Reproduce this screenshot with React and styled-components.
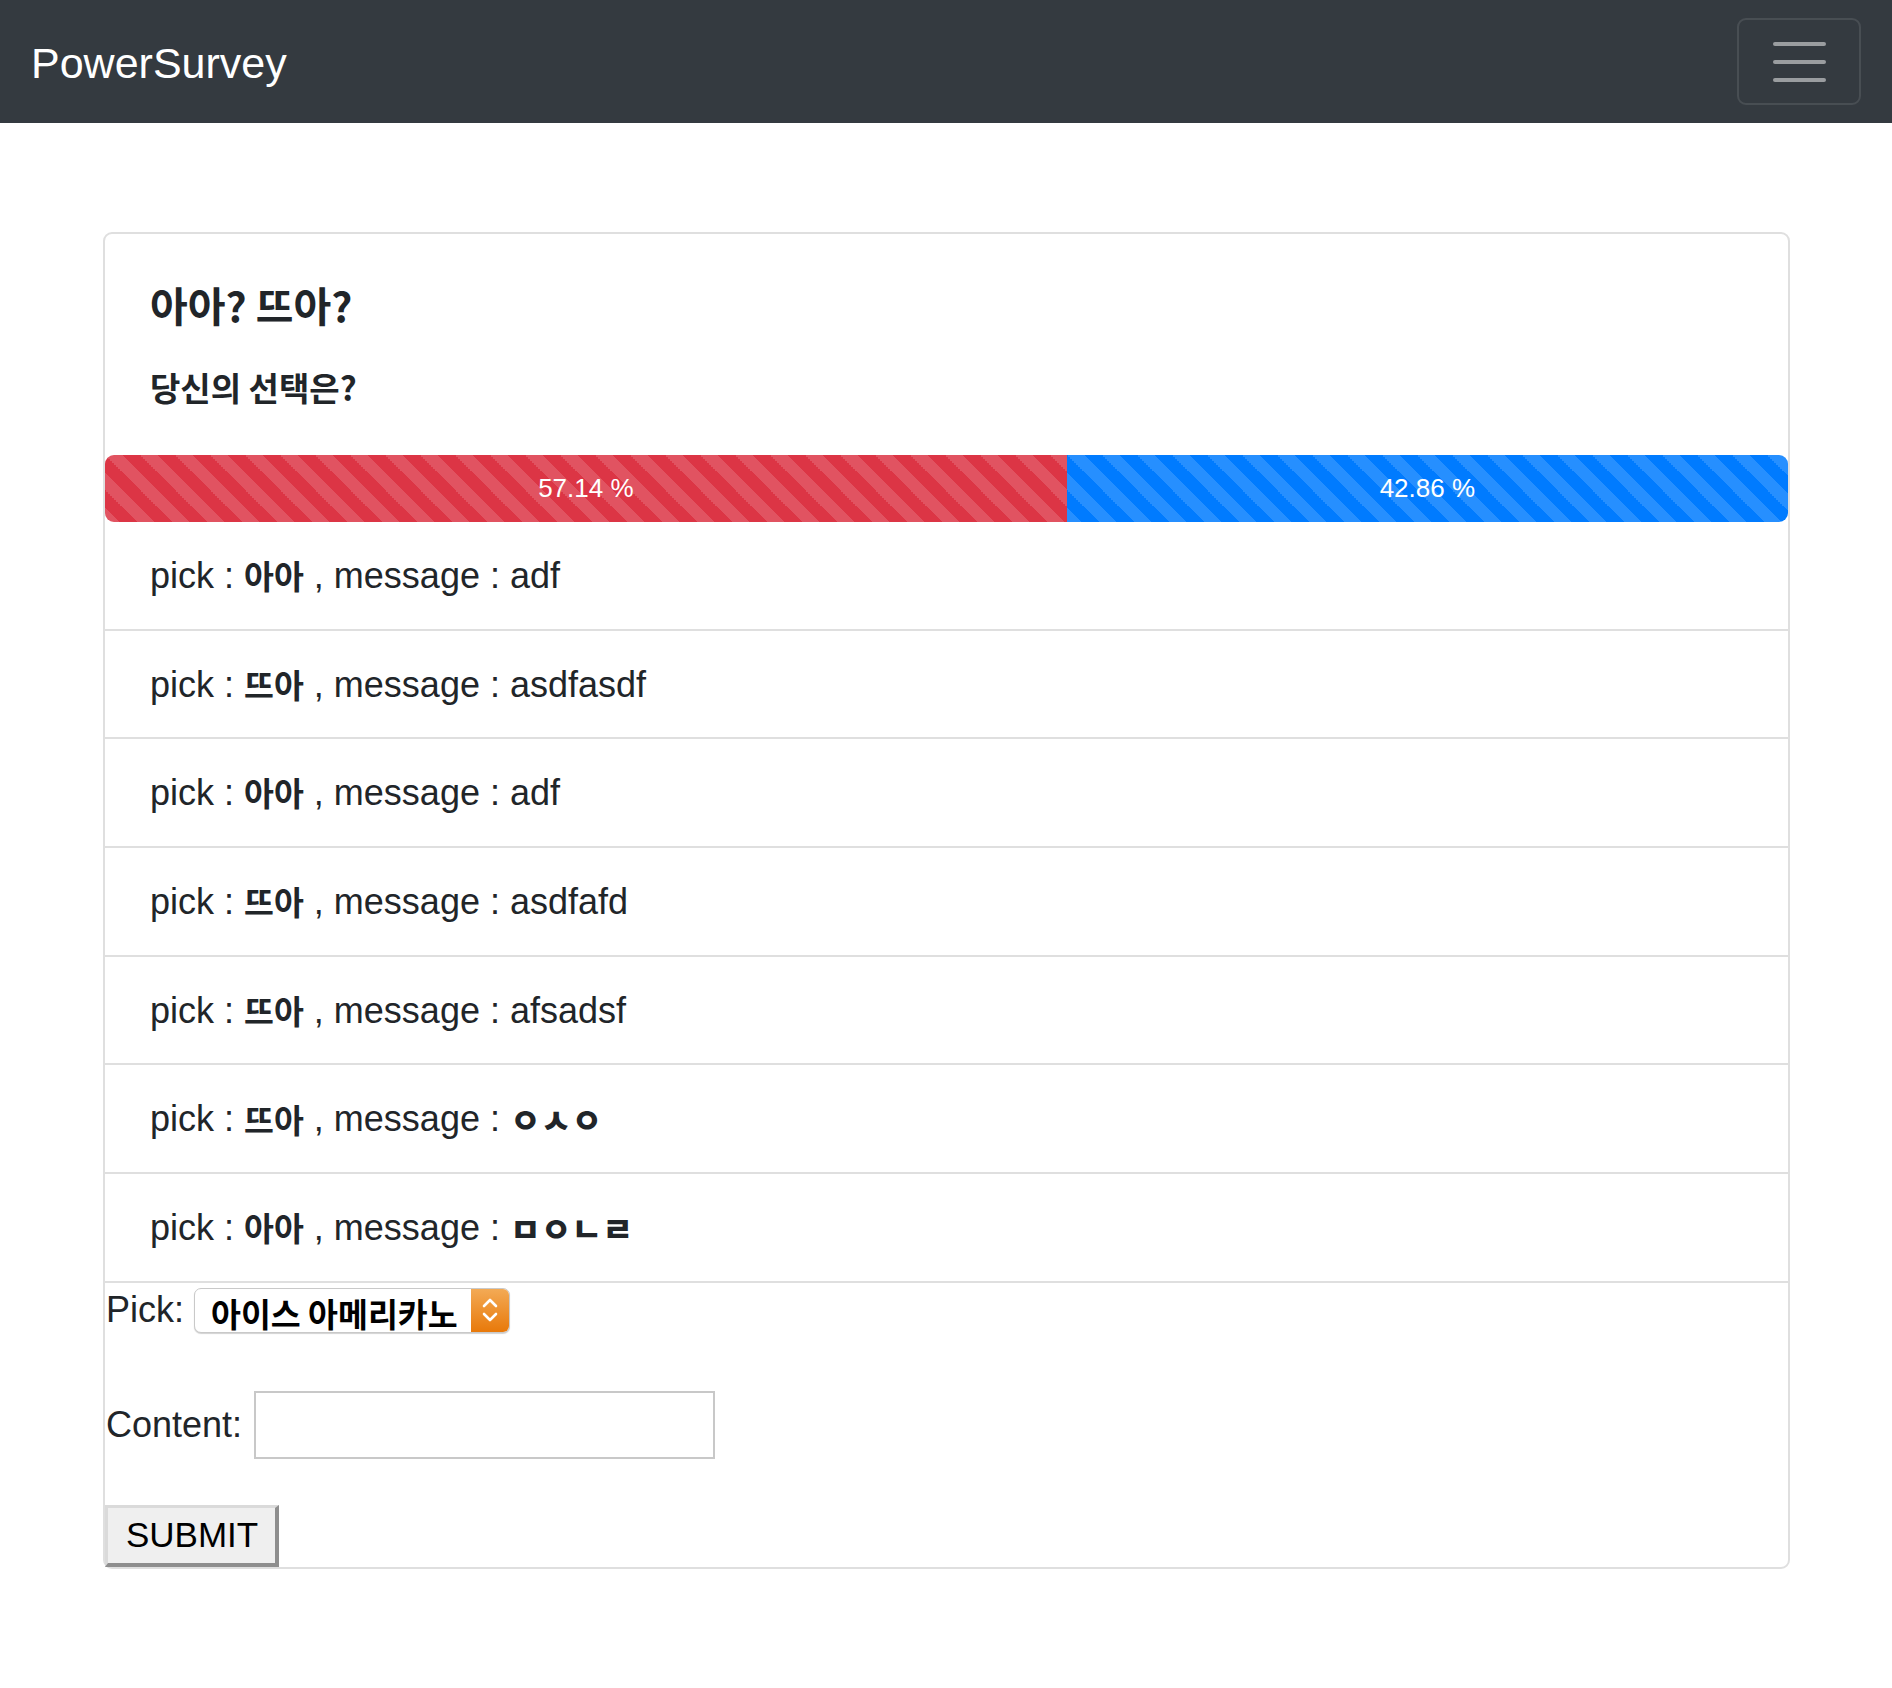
import React from "react";
import styled, { createGlobalStyle } from "styled-components";

const GlobalStyle = createGlobalStyle`
  html, body { margin: 0; padding: 0; background: #fff; }
  body {
    font-family: "Liberation Sans", Arial, "Noto Sans CJK KR", sans-serif;
    color: #212529;
  }
  * { box-sizing: border-box; }
`;

const Navbar = styled.nav`
  height: 123px;
  background: #343a40;
  display: flex;
  align-items: center;
  justify-content: space-between;
  padding: 0 31px;
`;

const Brand = styled.a`
  color: #fff;
  font-size: 43px;
  line-height: 1;
  text-decoration: none;
  padding-top: 3px;
`;

const Toggler = styled.button`
  width: 124px;
  height: 87px;
  border: 2px solid rgba(255, 255, 255, 0.1);
  border-radius: 9px;
  background: transparent;
  display: flex;
  flex-direction: column;
  align-items: center;
  justify-content: center;
  gap: 14px;
  padding: 0;
`;

const TogglerBar = styled.span`
  display: block;
  width: 53px;
  height: 4px;
  border-radius: 2px;
  background: rgba(255, 255, 255, 0.5);
`;

const Main = styled.main`
  padding: 109px 102px 120px 103px;
`;

const Card = styled.section`
  border: 2px solid #dfdfdf;
  border-radius: 9px;
  display: flex;
  flex-direction: column;
`;

const CardBody = styled.div`
  padding: 44px 44px 48px 45px;
`;

const Title = styled.h5`
  margin: 0 0 37px;
  font-family: "Noto Sans CJK KR", "Liberation Sans", sans-serif;
  font-weight: 700;
  font-size: 41px;
  line-height: 52px;
  color: #212529;
`;

const Subtitle = styled.h6`
  margin: 0;
  font-family: "Noto Sans CJK KR", "Liberation Sans", sans-serif;
  font-weight: 700;
  font-size: 33px;
  line-height: 40px;
  color: #212529;
`;

const Progress = styled.div`
  display: flex;
  height: 67px;
  border-radius: 9px;
  overflow: hidden;
`;

const Bar = styled.div`
  display: flex;
  align-items: center;
  justify-content: center;
  color: #fff;
  font-size: 26px;
  background-color: ${(p) => p.$color};
  background-image: linear-gradient(
    45deg,
    rgba(255, 255, 255, 0.15) 25%,
    transparent 25%,
    transparent 50%,
    rgba(255, 255, 255, 0.15) 50%,
    rgba(255, 255, 255, 0.15) 75%,
    transparent 75%,
    transparent
  );
  background-size: 35px 35px;
`;

const List = styled.ul`
  margin: 0;
  padding: 0;
  list-style: none;
`;

const ListItem = styled.li`
  display: flex;
  align-items: center;
  height: 108.7px;
  padding: 0 44px 0 45px;
  font-size: 36px;
  line-height: 53px;
  border-bottom: 2px solid #dfdfdf;
  white-space: pre;
`;

const PickName = styled.b`
  font-family: "Noto Sans CJK KR", sans-serif;
  font-weight: 700;
  font-size: 32.5px;
  line-height: 1;
`;

const Jamo = styled.span`
  font-family: "Noto Sans CJK KR", sans-serif;
  font-weight: 800;
  font-size: 33.5px;
  line-height: 1;
`;

const Form = styled.form`
  display: flex;
  flex-direction: column;
  align-items: flex-start;
`;

const Field = styled.div`
  display: flex;
  align-items: center;
  gap: ${(p) => p.$gap || 12}px;
  min-height: 55px;
  font-size: 36px;
  padding-left: 1px;
  margin-bottom: ${(p) => p.$mb || 0}px;
`;

const Label = styled.label`
  color: #212529;
`;

const SelectBox = styled.div`
  display: flex;
  width: 316px;
  height: 45px;
  border: 1px solid #c9c9c9;
  border-radius: 7px;
  overflow: hidden;
  background: #fff;
  box-shadow: 0 1px 1px rgba(0, 0, 0, 0.18);
`;

const NativeSelect = styled.select`
  appearance: none;
  -webkit-appearance: none;
  flex: 1;
  min-width: 0;
  height: 100%;
  border: 0;
  outline: 0;
  background: transparent;
  padding: 0 0 0 16px;
  font-family: "Noto Sans CJK KR", sans-serif;
  font-weight: 700;
  font-size: 32.5px;
  color: #000;
`;

const Stepper = styled.span`
  width: 38px;
  display: flex;
  align-items: center;
  justify-content: center;
  background: linear-gradient(#f3aa55, #e8790a);
`;

const TextInput = styled.input`
  width: 461px;
  height: 68px;
  border: 2px solid #c8c8c8;
  font-size: 30px;
  padding: 0 8px;
`;

const SubmitButton = styled.button`
  height: 62px;
  padding: 0 17px 0 18px;
  font-family: "Liberation Sans", Arial, sans-serif;
  font-size: 35px;
  color: #000;
  background: #efefef;
  border-style: solid;
  border-width: 3px 4px 4px 3px;
  border-color: #dadada #8e8e8e #8e8e8e #dadada;
`;

const votes = [
  { pick: "아아", message: "adf" },
  { pick: "뜨아", message: "asdfasdf" },
  { pick: "아아", message: "adf" },
  { pick: "뜨아", message: "asdfafd" },
  { pick: "뜨아", message: "afsadsf" },
  { pick: "뜨아", message: "ㅇㅅㅇ" },
  { pick: "아아", message: "ㅁㅇㄴㄹ" },
];

const isKorean = (s) => /[\u3131-\uD7A3]/.test(s);

export default function App() {
  const total = votes.length;
  const hot = votes.filter((v) => v.pick === "뜨아").length;
  const hotPct = (hot / total) * 100;
  const icePct = 100 - hotPct;

  return (
    <>
      <GlobalStyle />
      <Navbar>
        <Brand href="#">PowerSurvey</Brand>
        <Toggler aria-label="menu">
          <TogglerBar />
          <TogglerBar />
          <TogglerBar />
        </Toggler>
      </Navbar>
      <Main>
        <Card>
          <CardBody>
            <Title>아아? 뜨아?</Title>
            <Subtitle>당신의 선택은?</Subtitle>
          </CardBody>
          <Progress>
            <Bar $color="#dc3545" style={{ width: `${hotPct}%` }}>
              {hotPct.toFixed(2)} %
            </Bar>
            <Bar $color="#007bff" style={{ width: `${icePct}%` }}>
              {icePct.toFixed(2)} %
            </Bar>
          </Progress>
          <List>
            {votes.map((v, i) => (
              <ListItem key={i}>
                {"pick : "}
                <PickName>{v.pick}</PickName>
                {" , message : "}
                {isKorean(v.message) ? <Jamo>{v.message}</Jamo> : v.message}
              </ListItem>
            ))}
          </List>
          <Form onSubmit={(e) => e.preventDefault()}>
            <Field $mb={53} $gap={10}>
              <Label>Pick:</Label>
              <SelectBox>
                <NativeSelect defaultValue="ice">
                  <option value="ice">아이스 아메리카노</option>
                  <option value="hot">뜨거운 아메리카노</option>
                </NativeSelect>
                <Stepper>
                  <svg width="18" height="32" viewBox="0 0 18 32" fill="none">
                    <path d="M3 12 L9 6 L15 12" stroke="#fff" strokeWidth="2.6" strokeLinecap="round" strokeLinejoin="round" />
                    <path d="M3 20 L9 26 L15 20" stroke="#fff" strokeWidth="2.6" strokeLinecap="round" strokeLinejoin="round" />
                  </svg>
                </Stepper>
              </SelectBox>
            </Field>
            <Field $mb={46}>
              <Label>Content:</Label>
              <TextInput type="text" />
            </Field>
            <SubmitButton type="submit">SUBMIT</SubmitButton>
          </Form>
        </Card>
      </Main>
    </>
  );
}
